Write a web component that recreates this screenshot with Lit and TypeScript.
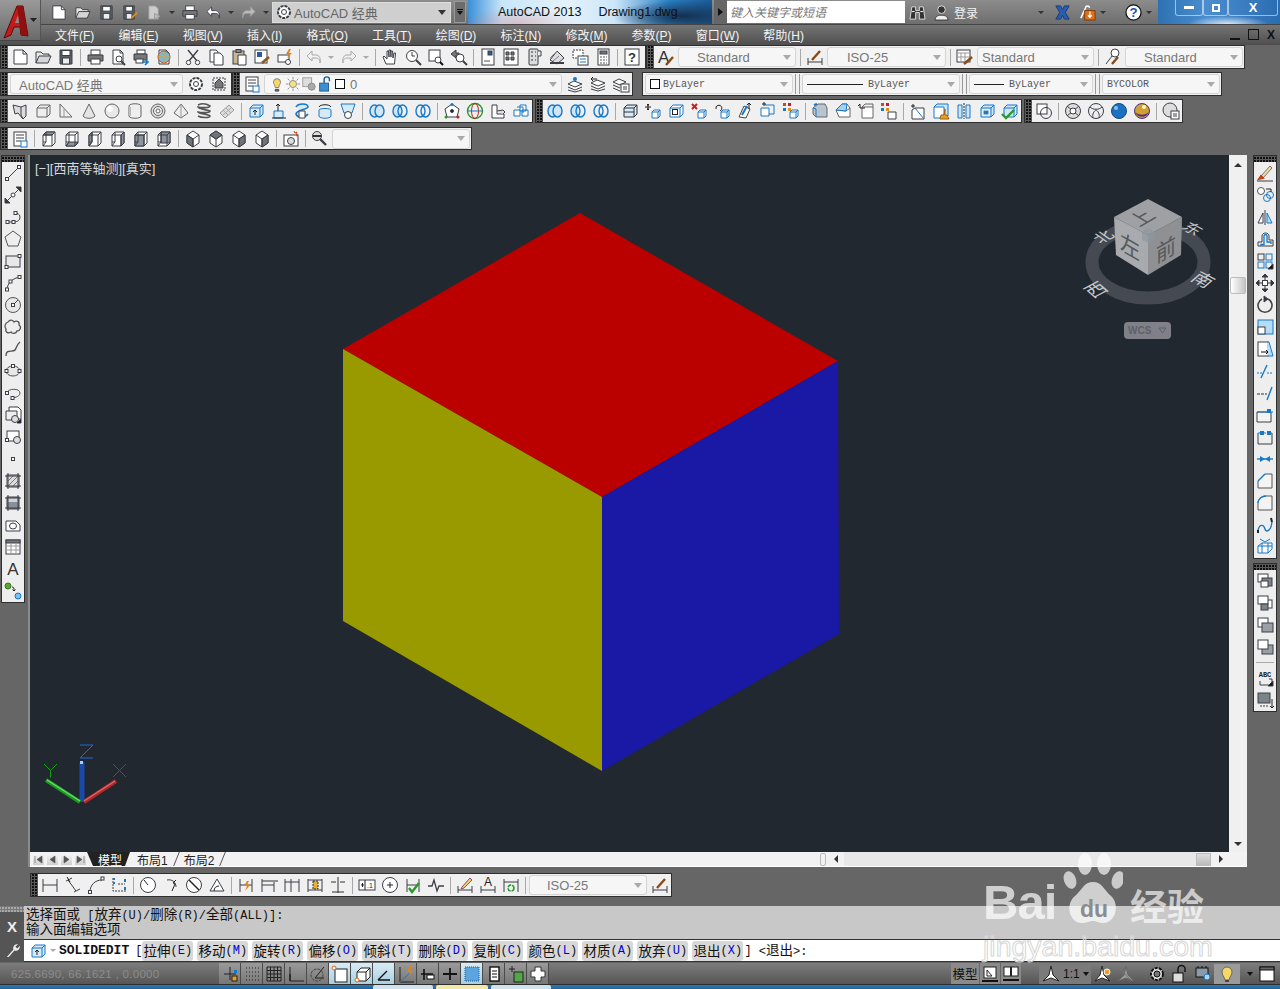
import { LitElement, css, html, svg } from 'lit';
import { customElement } from 'lit/decorators.js';

const B = '#1878c8';
const D = '#3c3f46';

const box = (fill = '#fff', s = B) => svg`<path d="M3 6l3-3h10v9l-3 3H3z" fill=${fill} stroke=${s}/><path d="M3 6h10v9M13 6l3-3" stroke=${s}/>`;
const smallBox = svg`<path d="M8 10l2-2h6v6l-2 2H8z" fill="#fff" stroke=${B}/><path d="M8 10h6v6M14 10l2-2" stroke=${B}/>`;
const page = svg`<path d="M4 2h7l3 3v11H4z" fill="#fff"/><path d="M11 2v3h3"/>`;
const rings = (a = 'none', b = 'none') => svg`<ellipse cx="6.5" cy="9" rx="4.5" ry="6" fill=${a} stroke=${B} stroke-width="1.4"/><ellipse cx="11.5" cy="9" rx="4.5" ry="6" fill=${b} stroke=${B} stroke-width="1.4"/>`;
const view = (f: string) => svg`<path d="M3 5l3-3h9v11l-3 3H3z" fill="#fff"/><path d=${f} fill="#8d949b"/><path d="M3 5h9v11M12 5l3-3M6 2v10H3M6 12l-3 4"/>`;
const iso = (f: string) => svg`<path d="M9 1l6 4v8l-6 4-6-4V5z" fill="#fff"/><path d=${f} fill="#6f747b"/><path d="M3 5l6 4 6-4M9 9v8"/>`;
const dimH = svg`<path d="M3 3v13M15 3v13M3 9h12"/>`;
const order = (a: string, b: string) => svg`<rect x="2" y="2" width="10" height="8" fill=${a}/><rect x="6" y="6" width="10" height="8" fill=${b}/><rect x="5" y="9" width="7" height="6" fill="#fff"/>`;

const I: Record<string, unknown> = {
  new: svg`<path d="M3 2h9l4 4v10H3z" fill="#fff"/><path d="M12 2v4h4"/>`,
  open: svg`<path d="M2 15V4h5l2 2h6v2" fill="#e8e8e8"/><path d="M2 15l3-7h12l-3 7z" fill="#d5d5d5"/>`,
  save: svg`<path d="M3 2h12v14H3z" fill="#5c6068"/><rect x="5" y="2.5" width="8" height="5" fill="#fff"/><rect x="5.5" y="10" width="7" height="6" fill="#eee"/>`,
  saveas: svg`<path d="M2 2h11v14H2z" fill="#5c6068"/><rect x="4" y="2.5" width="7" height="5" fill="#fff"/><rect x="4.5" y="10" width="6" height="6" fill="#eee"/><path d="M10 15l6-6" stroke="#d98a20" stroke-width="2"/>`,
  pub: svg`<path d="M3 2h7l3 3v11H3z" fill="#ccc" stroke="#999"/><path d="M9 10l6 3-6 3z" fill="#bbb" stroke="#999"/>`,
  print: svg`<rect x="5" y="2" width="9" height="5" fill="#fff"/><path d="M2 7h15v6H2z" fill="#777"/><rect x="5" y="11" width="9" height="5" fill="#fff"/>`,
  preview: svg`${page}<circle cx="10" cy="11" r="3" fill="#fff"/><path d="M12 13l4 4" stroke-width="2"/>`,
  plot: svg`<rect x="5" y="2" width="8" height="4" fill="#fff"/><path d="M2 6h13v6H2z" fill="#777"/><rect x="4" y="11" width="7" height="4" fill="#fff"/><path d="M10 14h6m-3-3l3 3-3 3" stroke=${B} stroke-width="1.6"/>`,
  dwf: svg`${page}<circle cx="9" cy="9" r="6" fill="#7ab8d8" stroke="#c05020"/><path d="M9 3v12M3 9h12" stroke="#e0a020"/>`,
  cut: svg`<path d="M4 2l9 11M14 2L5 13" stroke-width="1.4"/><circle cx="4.5" cy="14.5" r="2.2" fill="#fff"/><circle cx="13.5" cy="14.5" r="2.2" fill="#fff"/>`,
  copy: svg`<path d="M3 2h6l2 2v10H3z" fill="#fff"/><path d="M7 5h6l3 3v9H7z" fill="#fff"/>`,
  paste: svg`<rect x="3" y="3" width="11" height="13" fill="#c9b892"/><rect x="6" y="1.5" width="5" height="3" fill="#888"/><path d="M8 7h8v10H8z" fill="#fff"/>`,
  match: svg`<rect x="2" y="2" width="12" height="13" fill="#fff"/><rect x="4" y="4" width="5" height="5" fill="#2a5a9a" stroke="none"/><path d="M9 15l7-6" stroke="#8a5a20" stroke-width="2.6"/>`,
  bolt: svg`<rect x="2" y="7" width="11" height="7" fill="#fff"/><circle cx="12" cy="14" r="2.5" fill="#fff"/><path d="M13 1l-3 5h3l-2 4 5-5h-3l2-4z" fill="#e8820c" stroke="none"/>`,
  undoD: svg`<path d="M7 3L2 8l5 5V10h4c2 0 4 1 4 5 1-5-1-8-4-8H7z" fill="#fff"/>`,
  redoD: svg`<path d="M11 3l5 5-5 5v-3H7c-2 0-4 1-4 5-1-5 1-8 4-8h4z" fill="#bbb" stroke="#999"/>`,
  undoG: svg`<path d="M7 3L2 8l5 5V10h4c2 0 4 1 4 5 1-5-1-8-4-8H7z" fill="#f4f4f4" stroke="#a8a8a8"/>`,
  redoG: svg`<path d="M11 3l5 5-5 5v-3H7c-2 0-4 1-4 5-1-5 1-8 4-8h4z" fill="#f4f4f4" stroke="#a8a8a8"/>`,
  hand: svg`<path d="M5 16L2 9l1-1 3 3V3h1.5l.5 6V2h1.5l.5 7V3h1.5l.5 7 1-5h1.5l-1 11z" fill="#fff"/>`,
  zoomrt: svg`<circle cx="8" cy="8" r="5.5" fill="#fff"/><path d="M12 12l5 5" stroke-width="2"/><path d="M8 4v4h3"/>`,
  zoomwin: svg`<rect x="2" y="2" width="11" height="11" fill="#fff"/><circle cx="11" cy="12" r="3" fill="#fff"/><path d="M13 14l3 3" stroke="#111" stroke-width="2"/>`,
  zoomprev: svg`<path d="M1 6l5-4v3h3v2H6v3z" fill="#777"/><circle cx="10" cy="10" r="4" fill="#fff"/><path d="M13 13l4 4" stroke-width="2"/>`,
  props: svg`<rect x="3" y="1" width="12" height="16" fill="#fff"/><rect x="9" y="3" width="4" height="4" fill="#2a5a9a"/><path d="M5 13h6" stroke="#555"/>`,
  dc: svg`<rect x="2" y="1" width="14" height="16" fill="#fff"/><path d="M4 4h3v3H4zM9 4h3v3H9zM4 9h3v3H4zM9 9h3v3H9z" fill="#777"/>`,
  pal: svg`<rect x="4" y="1" width="9" height="16" rx="1" fill="#ddd"/><path d="M13 3h3v5h-3" fill="#eee"/><path d="M6 4h2M6 8h2M6 12h2M10 4h1M10 8h1M10 12h1" stroke="#888" stroke-width="2"/>`,
  sheet: svg`<path d="M2 12l7-9 7 7-7 6z" fill="#ddd"/><path d="M2 10l7-7M5 13l6-5" stroke="#888"/><path d="M2 15h14" stroke-width="2"/>`,
  markup: svg`<path d="M2 2h10v8H2z" fill="#fff" stroke-dasharray="2 1"/><rect x="7" y="8" width="10" height="9" fill="#fff"/><path d="M9 11h6M9 14h6" stroke=${B}/>`,
  calc: svg`<rect x="4" y="1" width="11" height="16" fill="#fff"/><rect x="6" y="3" width="7" height="3" fill="#777"/><path d="M6 9h7M6 12h7M6 15h7" stroke="#555" stroke-dasharray="2 1"/>`,
  help: svg`<rect x="2" y="1" width="14" height="16" fill="#fff"/><text x="9" y="14" font-size="13" font-weight="bold" text-anchor="middle" fill="#333" stroke="none">?</text>`,
  textstyle: svg`<text x="1" y="15" font-size="17" fill="#333" stroke="none" font-family="Liberation Sans">A</text><path d="M9 17l7-8" stroke="#8a4a18" stroke-width="2.4"/>`,
  dimstyle: svg`<path d="M2 10v7M16 10v7M2 14h14"/><path d="M6 12l8-9" stroke="#8a4a18" stroke-width="2.4"/>`,
  tablestyle: svg`<rect x="1" y="2" width="13" height="12" fill="#fff"/><path d="M1 5h13M1 9h13M5 5v9M9 5v9" stroke="#999"/><path d="M8 16l8-7" stroke="#8a4a18" stroke-width="2.4"/>`,
  mleader: svg`<circle cx="11" cy="5" r="4" fill="#fff"/><path d="M8 8l-6 8"/><path d="M8 16l6-7" stroke="#8a4a18" stroke-width="2.4"/>`,
  wscog: svg`<circle cx="9" cy="9" r="6" fill="#fff" stroke-dasharray="3 1" stroke-width="2"/><circle cx="9" cy="9" r="2.5"/>`,
  lockui: svg`<path d="M3 3h12v12H3z" stroke-dasharray="2 1" fill="#eee"/><path d="M5 13V8l4-4 4 4v5z" fill="#777"/>`,
  layers: svg`<rect x="3" y="2" width="12" height="14" fill="#fff"/><path d="M5 5h8M5 8h8M5 11h5"/><rect x="10" y="11" width="6" height="6" fill="#fff" stroke=${B}/>`,
  layerstate: svg`<path d="M2 9l6-3 8 3-7 3zM2 12l7 3 7-3M2 15l7 2 7-2" fill="#fff"/><circle cx="9" cy="4" r="2" fill=${B} stroke="none"/>`,
  layerprev: svg`<path d="M2 8l6-3 8 3-7 3zM2 11l7 3 7-3M2 14l7 2 7-2" fill="#fff"/><path d="M8 4H2m2-2L2 4l2 2" stroke="#222"/>`,
  layerlist: svg`<path d="M1 7l6-3 7 3-6 3zM1 10l7 3M1 13l7 3" fill="#fff"/><rect x="9" y="9" width="8" height="8" fill="#fff"/><path d="M11 12h4M11 14h4"/>`,
  bulb: svg`<path d="M5 7a4 4 0 118 0c0 2-2 3-2 6H7c0-3-2-4-2-6z" fill="#f6d868" stroke="#777"/><path d="M7 15h4v2H7z" fill="#777"/>`,
  sun: svg`<circle cx="9" cy="9" r="4" fill="#f6e088" stroke="#888"/><path d="M9 1v3M9 14v3M1 9h3M14 9h3M3 3l2 2M13 13l2 2M15 3l-2 2M5 13l-2 2" stroke="#888"/>`,
  freeze: svg`<rect x="2" y="2" width="10" height="10" fill="#ddd" stroke="#999"/><circle cx="12" cy="12" r="4" fill="#aaa" stroke="#888"/>`,
  lock: svg`<rect x="3" y="8" width="10" height="9" fill="#3b8fd0" stroke="#1c5a90"/><path d="M8 8V4a3 3 0 016 0v2" stroke="#1c5a90" stroke-width="1.6"/>`,
  polysolid: svg`<path d="M2 3l8 2 5-2v11l-3 3-5-6-3 1z" fill="#dcdcdc"/><path d="M10 5v8l2 4"/>`,
  box3d: svg`<path d="M3 6l3-3h10v9l-3 3H3z" fill="#eee" stroke="#666"/><path d="M3 6h10v9M13 6l3-3" stroke="#666"/>`,
  wedge: svg`<path d="M3 2l12 13H3z" fill="#eee" stroke="#666"/><path d="M7 7v8" stroke="#999"/>`,
  cone: svg`<path d="M9 2l6 12c-2 3-10 3-12 0z" fill="#e4e4e4" stroke="#666"/>`,
  sphere: svg`<circle cx="9" cy="9" r="7" fill="#e8e8e8" stroke="#666"/><ellipse cx="7" cy="7" rx="3" ry="3" fill="#fff" stroke="none"/>`,
  cyl: svg`<path d="M3 4c0-3 12-3 12 0v10c0 3-12 3-12 0z" fill="#eee" stroke="#666"/><path d="M4 5v9" stroke="#bbb" stroke-width="2"/>`,
  torus: svg`<circle cx="9" cy="9" r="7" fill="#ddd" stroke="#666"/><circle cx="9" cy="9" r="4.5" fill="#eee" stroke="#666"/><circle cx="9" cy="9" r="2" fill="#fff" stroke="#666"/>`,
  pyramid: svg`<path d="M9 2l7 9-7 5-7-5z" fill="#eee" stroke="#666"/><path d="M9 2v14" stroke="#999"/>`,
  helix: svg`<path d="M3 3c4-2 9-1 12 1 0 2-9 2-12 1 0 2 10 3 12 4 0 2-9 2-12 1 0 2 10 2 12 4 0 2-9 2-12 0" stroke="#555" stroke-width="1.6"/>`,
  planar: svg`<path d="M2 11l9-8 5 5-9 8z" fill="#ddd" stroke="#999"/><path d="M5 8l5 5M8 6l5 5M5 13l8-7" stroke="#aaa"/>`,
  extrude: svg`${box('#d6eaf8')}<path d="M8 13V8m-2 2l2-2 2 2" stroke="#222"/>`,
  press: svg`<path d="M4 9h9v7H4z" fill="#d6eaf8" stroke=${B}/><path d="M8 9V2m-2 2l2-2 2 2" stroke="#222"/><path d="M2 16h14" stroke="#222"/>`,
  sweep: svg`<path d="M3 5c2-4 12-4 12 0-1 3-11 2-12 7 1 4 9 4 12 0" fill="#d6eaf8" stroke=${B} stroke-width="1.6"/><path d="M6 9h6v7H6z" fill="#fff"/>`,
  revolve: svg`<path d="M3 5c1-3 11-3 12 0" stroke="#222"/><path d="M3 8c0-2 12-2 12 0v6c0 3-12 3-12 0z" fill="#d6eaf8" stroke=${B}/>`,
  loft: svg`<path d="M2 2h14l-3 9H5z" fill="#d6eaf8" stroke=${B}/><circle cx="9" cy="13" r="3.5" fill="#fff"/>`,
  union: rings('#cfe6f8', '#cfe6f8'),
  subtract: rings('#cfe6f8'),
  intersect: rings('none', 'none'),
  gizmo: svg`<path d="M9 2l7 5-2 8H4L2 7z" fill="#fff"/><circle cx="9" cy="9" r="1.5" fill="#222"/><circle cx="9" cy="2.5" r="1.5" fill=${B} stroke="none"/><circle cx="3" cy="15" r="1.5" fill="#2a9a2a" stroke="none"/><circle cx="15" cy="15" r="1.5" fill="#c02020" stroke="none"/>`,
  orbit3d: svg`<circle cx="9" cy="9" r="7.5" stroke="#2a9a2a" stroke-width="1.4" fill="#eee"/><ellipse cx="9" cy="9" rx="3.5" ry="7.5" stroke="#c02020"/><path d="M1.5 9h15" stroke=${B}/>`,
  align3d: svg`<path d="M3 3h5v9h7v4H3z" fill="#fff"/><path d="M8 9l6-1 2 2-2 2" fill="#ddd"/>`,
  array3d: svg`<path d="M2 8h6v6H2zM8 3h6v6H8zM10 8h6v6h-6zM5 5h6v6" fill="#fff" stroke=${B}/>`,
  faceExtrude: svg`${box('#d6eaf8', '#333')}<path d="M3 10h10" stroke="#333"/>`,
  fMove: svg`<path d="M4 2v6M1 5h6M4 2L3 3h2zM4 8L3 7h2z" stroke="#222"/>${smallBox}`,
  fOff: svg`${box('#fff')}<rect x="5.5" y="7.5" width="5" height="5" stroke="#222"/>`,
  fDel: svg`<path d="M2 2l5 5M7 2L2 7" stroke="#c02020" stroke-width="2"/>${smallBox}`,
  fRot: svg`<path d="M3 7a3 3 0 114 2" stroke="#222"/>${smallBox}`,
  fTaper: svg`<path d="M3 15l5-11 6 3-4 9z" fill="#fff" stroke="#444"/><path d="M6 13l5-9" stroke=${B} stroke-width="2"/><path d="M13 7V1m-2 2l2-2 2 2" stroke="#222"/>`,
  fCopy: svg`<path d="M2 6h8v8H2z" fill="#fff" stroke=${B}/><path d="M6 3h9v9h-5" stroke=${B}/><path d="M3 2h4M5 0v4" stroke="#222"/>`,
  fColor: svg`<rect x="1" y="1" width="3" height="3" fill="#c05020" stroke="none"/><rect x="6" y="1" width="3" height="3" fill="#c02040" stroke="none"/><rect x="1" y="6" width="3" height="3" fill=${B} stroke="none"/><rect x="6" y="6" width="3" height="3" fill="#e09020" stroke="none"/>${smallBox}`,
  eFace: svg`<path d="M2 6l5-4h7l2 4v9H5l-3-3z" fill="#b9c5ce" stroke="#666"/><path d="M5 15V7l-3-1" stroke=${B}/><path d="M3 3l3-1" stroke=${B} stroke-width="2"/>`,
  eChamfer: svg`<path d="M2 8l6-6h5l3 4v9H5z" fill="#fff" stroke="#666"/><path d="M2 8l10 1 4-3" fill="none" stroke="#666"/><path d="M2 8l6-6 5 0-1 7z" fill="#a9d0ec" stroke=${B}/>`,
  eExtract: svg`<path d="M5 5h11v11H5z" fill="#fff" stroke="#666"/><path d="M5 5l3-3h8v3" stroke="#666"/><path d="M1 4l2-2v4h5" stroke="#222"/>`,
  eColor: svg`<rect x="1" y="1" width="3" height="3" fill="#c05020" stroke="none"/><rect x="6" y="1" width="3" height="3" fill="#c02040" stroke="none"/><rect x="1" y="6" width="3" height="3" fill=${B} stroke="none"/><rect x="6" y="6" width="3" height="3" fill="#e09020" stroke="none"/><path d="M8 10h8v7H8z" fill="#fff"/>`,
  imprint: svg`<path d="M2 4h4M4 2v4" stroke="#222"/><path d="M3 8l3-2h9v11H3z" fill="#fff"/><path d="M6 6l9 11" stroke=${B}/>`,
  clean: svg`<path d="M2 5l3-3h11v12h-4" fill="#cfe6f8" stroke=${B}/><path d="M2 5h10v11H2z" fill="#fff" stroke=${B}/><path d="M13 7l-1 6h-3l-1 4h9l-2-4h-2z" fill="#e8a020" stroke="#a06010"/>`,
  separate: svg`<path d="M3 3h4v13H3zM11 3h4v13h-4z" fill="#cfe6f8" stroke=${B}/><path d="M9 1v16" stroke="#222" stroke-dasharray="2 1"/>`,
  shell: svg`${box('#cfe6f8')}<rect x="5" y="8" width="6" height="5" fill="#2a78b8" stroke="#fff"/>`,
  check3d: svg`${box('#cfe6f8')}<path d="M1 12l4 4 8-8" stroke="#2a9a2a" stroke-width="2.4"/>`,
  slice: svg`<rect x="2" y="2" width="10" height="10" fill="#fff"/><circle cx="11" cy="11" r="5.5"/>`,
  s1: svg`<circle cx="9" cy="9" r="7.5" fill="#ddd"/><path d="M3 4l12 10M3 14L15 4"/><circle cx="9" cy="9" r="3" fill="#fff"/>`,
  s2: svg`<circle cx="9" cy="9" r="7.5" fill="#eee"/><path d="M3 5c3 3 9 3 12 0M6 16c-1-4 1-7 3-8 2 1 4 4 3 8"/>`,
  s3: svg`<circle cx="9" cy="9" r="7.5" fill="#1c70c0" stroke="#104a88"/><circle cx="6" cy="6" r="2" fill="#8ac0ee" stroke="none"/>`,
  s4: svg`<circle cx="9" cy="9" r="7.5" fill="#d0a030" stroke="#50308a"/><path d="M2 10a7.5 7.5 0 0014 0c-3 3-10 4-14 0z" fill="#50308a" stroke="none"/><circle cx="11" cy="5" r="2" fill="#fff6c0" stroke="none"/>`,
  s5: svg`<circle cx="8" cy="8" r="7" fill="#ddd"/><rect x="9" y="9" width="8" height="8" fill="#fff"/><path d="M11 12h4M11 14h4"/>`,
  vTop: view('M3 5l3-3h9l-3 3z'),
  vBot: view('M3 16l3-4h9l-3 4z'),
  vLeft: view('M3 5l3-3v10l-3 4z'),
  vRight: view('M12 5l3-3v11l-3 3z'),
  vFront: view('M3 5h9v11H3z'),
  vBack: view('M6 2h9v11H6z'),
  iso1: iso('M3 5l6 4v8l-6-4z'),
  iso2: iso('M9 1l6 4-6 4-6-4z'),
  iso3: iso('M15 5l-6 4v8l6-4z'),
  iso4: iso('M9 9l6-4v8l-6 4z'),
  cam: svg`<rect x="2" y="5" width="14" height="11" fill="#fff"/><circle cx="9" cy="11" r="3.5" fill="#ddd"/><path d="M12 1l1 2 2-1-1 2 2 1-2 1" stroke="#d04010"/>`,
  ucsback: svg`<circle cx="6" cy="6" r="4.5" fill="#ddd"/><path d="M2 6h8" stroke="#333" stroke-width="2"/><path d="M9 9l6 6" stroke-width="2.4"/>`,
  line: svg`<path d="M3 15L15 3"/><rect x="1.5" y="13.5" width="3" height="3" fill="#fff"/><rect x="13.5" y="1.5" width="3" height="3" fill="#fff"/>`,
  xline: svg`<path d="M2 16L16 2"/><path d="M1 17v-5l5 5zM17 1v5l-5-5z" fill="#333"/><circle cx="9" cy="9" r="2" fill="#fff"/>`,
  pline: svg`<path d="M3 14h6c5 0 7-2 7-5s-3-4-5-4"/><rect x="2" y="12.5" width="3" height="3" fill="#fff"/><rect x="8" y="12.5" width="3" height="3" fill="#fff"/><rect x="10" y="3.5" width="3" height="3" fill="#fff"/>`,
  polygon: svg`<path d="M9 1l8 6-3 9H4L1 7z" fill="#eee" stroke="#555"/>`,
  rect: svg`<rect x="2" y="4" width="14" height="11" fill="#e8e8e8"/><rect x="1" y="13.5" width="3" height="3" fill="#fff"/><rect x="14" y="2.5" width="3" height="3" fill="#fff"/>`,
  arc: svg`<path d="M3 16c0-7 6-12 13-13"/><rect x="1.5" y="14" width="3" height="3" fill="#fff"/><rect x="5" y="6" width="3" height="3" fill="#fff"/><rect x="14" y="1.5" width="3" height="3" fill="#fff"/>`,
  circle: svg`<circle cx="9" cy="9" r="7.5" fill="#e8e8e8" stroke="#555"/><rect x="7.5" y="7.5" width="3" height="3" fill="#fff"/><path d="M10 8l4-4"/>`,
  cloud: svg`<path d="M4 4c2-3 5-2 6 0 3-2 6 0 5 3 3 2 1 6-2 6-1 3-5 3-6 1-3 2-6 0-5-3-2-2-1-6 2-7z" fill="#eee" stroke="#555" stroke-width="1.3"/>`,
  spline: svg`<path d="M2 16c0-8 7-3 9-6s2-6 5-8" stroke="#555" stroke-width="1.4"/>`,
  ellipse: svg`<ellipse cx="9" cy="9" rx="7" ry="5" fill="#e8e8e8" stroke="#555"/><rect x="1" y="7.5" width="3" height="3" fill="#fff"/><rect x="14" y="7.5" width="3" height="3" fill="#fff"/><rect x="7.5" y="2.5" width="3" height="3" fill="#fff"/>`,
  earc: svg`<path d="M3 9c1-5 13-5 13 0 0 4-7 5-8 5" stroke="#555"/><rect x="1.5" y="7.5" width="3" height="3" fill="#fff"/><rect x="7" y="12.5" width="3" height="3" fill="#fff"/>`,
  insert: svg`<path d="M5 1h9l3 3v9H5z" fill="#fff"/><path d="M2 5h11v9H2z" fill="#eee"/><circle cx="11" cy="13" r="3.5" fill="#ddd"/><path d="M13 17l4-4v4z" fill="#111"/>`,
  block: svg`<rect x="3" y="3" width="12" height="10" fill="#fff"/><circle cx="13" cy="12" r="3.5" fill="#ddd"/><rect x="1.5" y="10.5" width="3" height="3" fill="#fff"/>`,
  point: svg`<rect x="7.5" y="7.5" width="3" height="3" fill="#fff"/>`,
  hatch: svg`<rect x="3" y="3" width="12" height="12" fill="#ddd"/><path d="M4 9l5-5M4 14L14 4M9 14l5-5" stroke="#777"/><path d="M1 4h16M1 14h16M4 1v16M14 1v16"/>`,
  gradient: svg`<rect x="3" y="3" width="12" height="12" fill="#8a9098"/><rect x="4" y="4" width="10" height="4" fill="#d0d4d8" stroke="none"/><path d="M1 4h16M1 14h16M4 1v16M14 1v16"/>`,
  region: svg`<path d="M2 5h10l4 4v6H2z" fill="#fff"/><ellipse cx="9" cy="10" rx="3.5" ry="3" fill="#fff"/>`,
  table: svg`<rect x="2" y="2" width="14" height="14" fill="#fff"/><rect x="2" y="2" width="14" height="3" fill="#777"/><path d="M2 8h14M2 12h14M7 5v11M12 5v11" stroke="#999"/>`,
  text: svg`<text x="9" y="15" font-size="17" text-anchor="middle" fill="#333" stroke="none" font-family="Liberation Sans">A</text>`,
  addsel: svg`<circle cx="4" cy="4" r="3" fill="#5aa838" stroke="#3a7820"/><circle cx="14" cy="14" r="3" fill="#7ac0ee" stroke=${B}/><path d="M8 5c2 0 2 1 2 4m-1.5-1.5L10 9l1.5-1.5" stroke="#222"/>`,
  erase: svg`<path d="M5 12L14 2l2 2-9 10z" fill="#f0d8a0" stroke="#777"/><path d="M3 15l2-3 2 2z" fill="#c04010" stroke="#c04010" stroke-width="2"/><path d="M1 17h16"/>`,
  copyobj: svg`<circle cx="5" cy="5" r="3.5" fill="#fff" stroke="#555"/><circle cx="11" cy="12" r="3.5" stroke=${B}/><circle cx="14" cy="9" r="3.5" stroke=${B}/><path d="M10 3h5v3" stroke="#222"/>`,
  mirror: svg`<path d="M2 15l5-10v10z" fill="#fff"/><path d="M16 15l-5-10v10z" fill="#b6dcf6" stroke=${B}/><path d="M9 2v15"/>`,
  offset: svg`<path d="M2 16v-4h4V6c0-4 7-4 7 0v4h4v6z"/><path d="M5 16v-1.5h3V6c0-2 3-2 3 0v6h4v2" stroke=${B} stroke-width="1.3"/>`,
  array: svg`<rect x="2" y="2" width="6" height="6"/><rect x="10" y="2" width="6" height="6" stroke=${B}/><rect x="2" y="10" width="6" height="6" stroke=${B}/><rect x="10" y="10" width="6" height="6" stroke=${B}/><path d="M12 17l5-5v5z" fill="#111"/>`,
  move: svg`<path d="M9 1v16M1 9h16" stroke="#333"/><path d="M9 0l-3 3h6zM9 18l-3-3h6zM0 9l3-3v6zM18 9l-3-3v6z" fill="#333"/><rect x="6.5" y="6.5" width="5" height="5" fill="#fff"/>`,
  rotate: svg`<path d="M6 3a7 7 0 106 0" stroke="#444" stroke-width="1.6"/><path d="M8 0l4 3-4 3z" fill="#333"/>`,
  scale: svg`<rect x="2" y="2" width="15" height="14" fill="#b6dcf6" stroke=${B}/><rect x="2" y="9" width="7" height="7" fill="#fff"/>`,
  stretch: svg`<rect x="2" y="2" width="10" height="14" fill="#fff"/><path d="M11 2h2l4 14h-6" fill="#b6dcf6" stroke=${B}/><path d="M5 12h7m-2-2l2 2-2 2" stroke="#111"/>`,
  trim: svg`<path d="M1 11h5M11 11h6" stroke-dasharray="2 1" stroke=${B}/><path d="M5 16l6-13" stroke=${B} stroke-width="1.4"/>`,
  extend: svg`<path d="M1 10h10" stroke="#333" stroke-dasharray="3 1"/><path d="M11 16l5-13" stroke=${B} stroke-width="1.4"/>`,
  breakpt: svg`<path d="M1 6h14v10H1z" fill="#f4f4f4"/><path d="M1 6h16" stroke=${B}/><rect x="11" y="3" width="4" height="4" fill=${B} stroke="none"/>`,
  brk: svg`<path d="M2 5v11h14V5"/><path d="M2 5h14" stroke=${B} stroke-dasharray="8 4" /><rect x="4" y="3" width="4" height="4" fill=${B} stroke="none"/><rect x="11" y="3" width="4" height="4" fill=${B} stroke="none"/>`,
  join: svg`<path d="M1 9h16" stroke=${B} stroke-width="1.4"/><path d="M4 6l5 3-5 3zM14 6L9 9l5 3z" fill=${B} stroke="none"/>`,
  chamfer: svg`<path d="M2 16V9l7-7h7v14z" fill="#f4f4f4" stroke="#555"/><path d="M2 9l7-7" stroke=${B} stroke-width="1.4"/>`,
  fillet: svg`<path d="M2 16V9c0-4 4-7 8-7h6v14z" fill="#f4f4f4" stroke="#555"/><path d="M2 9c0-4 4-7 8-7" stroke=${B} stroke-width="1.4"/>`,
  blend: svg`<path d="M2 14c2-7 6-5 7-1s6 2 7-7" stroke=${B} stroke-width="1.4"/><path d="M2 14v3M15 2l1 4" stroke="#222" stroke-width="2"/>`,
  explode: svg`<path d="M2 8l4-3h10v6l-4 4H2z" fill="#fff" stroke=${B}/><path d="M6 5v10M12 5v10M2 8h14" stroke=${B}/><path d="M4 1l5 3 5-3" stroke=${B}/>`,
  oFront: order('#fff', '#7c848b'),
  oBack: svg`<rect x="6" y="6" width="10" height="8" fill="#fff"/><rect x="2" y="2" width="10" height="8" fill="#fff"/><rect x="5" y="10" width="7" height="6" fill="#7c848b"/>`,
  oAbove: svg`<rect x="2" y="2" width="10" height="9" fill="#fff"/><rect x="6" y="7" width="11" height="9" fill="#9aa0a6"/>`,
  oBelow: svg`<rect x="6" y="7" width="11" height="9" fill="#9aa0a6"/><rect x="2" y="2" width="10" height="9" fill="#fff"/>`,
  abc: svg`<text x="9" y="8" font-size="7" font-weight="bold" text-anchor="middle" fill="#222" stroke="none" font-family="Liberation Mono">ABC</text><path d="M13 10h3v6H4v-4"/><path d="M12 17l5-5v5z" fill="#111"/>`,
  bound: svg`<rect x="2" y="2" width="12" height="10" fill="#7c848b"/><path d="M4 15h8" stroke-dasharray="2 1"/><path d="M16 8v9m-2-2l2 2 2-2" stroke="#222"/>`,
  dLinear: svg`<path d="M2 3v13M16 3v13M2 9h14"/>`,
  dAligned: svg`<path d="M2 5l6 -3M10 16l6-3M4 4l8 11" /><path d="M3 1l3 5" stroke="#222" />`,
  dArc: svg`<path d="M3 16c0-7 5-12 12-12"/><rect x="1.5" y="14.5" width="3" height="3" fill="#fff"/><rect x="14" y="1" width="3" height="3" fill="#fff"/>`,
  dOrd: svg`<path d="M3 2v13h13M8 8h7" stroke-dasharray="2 1"/><path d="M3 3h2M3 7h2" stroke=${B} stroke-width="2"/><path d="M15 3v3M15 11v3" stroke=${B} stroke-width="2"/>`,
  dRadius: svg`<circle cx="9" cy="9" r="7.5" fill="#fff"/><path d="M9 9l-4-5" stroke="#222"/>`,
  dJog: svg`<path d="M5 4c5-1 9 2 9 7"/><path d="M14 4l-3 3 2 1-3 7" stroke="#222"/>`,
  dDiam: svg`<circle cx="9" cy="9" r="7.5" fill="#fff"/><path d="M4 4l10 10" stroke="#222" stroke-width="1.4"/>`,
  dAngle: svg`<path d="M2 15h14L9 3z" fill="#fff"/><path d="M6 15c0-3 2-5 5-5" stroke="#222"/>`,
  dQuick: svg`${dimH}<path d="M10 5l-3 5h3l-2 5 5-6h-3l2-4z" fill="#e8820c" stroke="none"/>`,
  dBase: svg`<path d="M2 3v13M14 6v10M2 9h12"/><path d="M2 5h16" stroke="#333"/>`,
  dCont: svg`<path d="M2 3v13M8 3v13M16 3v13M2 6h14"/>`,
  dSpace: svg`<path d="M2 3v13M16 3v13M2 4h14M2 14h14"/><rect x="7" y="5" width="5" height="8" fill="#e8b030" stroke="#333" stroke-dasharray="2 1"/>`,
  dBreak: svg`<path d="M9 1v16M3 16h12M2 6h5M11 6h5" stroke="#333"/>`,
  dTol: svg`<rect x="1" y="4" width="16" height="10" fill="#fff"/><path d="M7 4v10M3 9h3M4.5 7v4" stroke="#222"/><text x="12" y="12" font-size="7" fill="#222" stroke="none" text-anchor="middle">.1</text>`,
  dCenter: svg`<circle cx="9" cy="9" r="7.5" fill="#fff"/><path d="M6 9h6M9 6v6" stroke="#222"/>`,
  dInspect: svg`${dimH}<path d="M5 12l3 4 7-9" stroke="#2a9a2a" stroke-width="2.4"/>`,
  dJogLine: svg`<path d="M1 10h4l2-6 3 11 2-5h5" stroke-width="1.3"/>`,
  dEdit: svg`<path d="M2 10v7M16 10v7M2 14h14"/><path d="M6 11l8-9 2 2-8 8-3 1z" fill="#f0d070" stroke="#855"/>`,
  dTextEd: svg`<path d="M2 10v7M16 10v7M2 14h14"/><text x="9" y="10" font-size="12" text-anchor="middle" fill="#222" stroke="none" font-family="Liberation Sans">A</text>`,
  dUpdate: svg`<path d="M2 3v13M16 3v13M2 6h14"/><circle cx="9" cy="12" r="3" stroke="#2a9a2a" stroke-width="1.6" stroke-dasharray="4 1"/>`,
  sInfer: svg`<path d="M9 2v13M3 9h12" stroke="#222"/><rect x="11" y="11" width="5" height="5" fill="#e8a020" stroke="#222"/><rect x="13" y="5" width="3" height="3" fill=${B} stroke="none"/>`,
  sSnap: svg`<path d="M3 3h13M3 7h13M3 11h13M3 15h13" stroke="#222" stroke-dasharray="1 2"/>`,
  sGrid: svg`<path d="M2 2h14v14H2zM2 5.5h14M2 9h14M2 12.5h14M5.5 2v14M9 2v14M12.5 2v14" stroke="#222"/>`,
  sOrtho: svg`<path d="M3 2v14h14" stroke="#222"/><path d="M3 16V9" stroke="#222" stroke-width="1.4"/>`,
  sPolar: svg`<circle cx="8" cy="10" r="6" stroke="#444" stroke-dasharray="3 1"/><path d="M6 13l9-11" stroke="#222"/><path d="M6 13h9" stroke="#222"/>`,
  sOsnap: svg`<rect x="4" y="4" width="12" height="13" fill="#fff" stroke="#222"/><circle cx="3" cy="3" r="2" fill="#fff" stroke="#e06010"/>`,
  s3dosnap: svg`<path d="M4 7l4-4h9v9l-4 4H4z" fill="#fff" stroke="#222"/><path d="M4 7h9v9M13 7l4-4" stroke="#222"/><circle cx="4" cy="15" r="2" fill="#fff" stroke="#e06010"/>`,
  sOtrack: svg`<path d="M3 15h12M3 15l9-9" stroke="#111" stroke-width="1.4"/>`,
  sDucs: svg`<path d="M3 2v15h14" stroke="#222"/><path d="M3 17L15 6" stroke=${B}/><path d="M13 1l-3 6h3l-2 5 5-6h-3l2-5z" fill="#e8820c" stroke="none"/>`,
  sDyn: svg`<path d="M5 4v11M2 9h12" stroke="#111" stroke-width="1.6"/><rect x="8" y="10" width="7" height="4" fill="#fff" stroke="#111"/>`,
  sLwt: svg`<path d="M9 3v12" stroke="#111" stroke-width="1.8"/><path d="M2 9h14" stroke="#111" stroke-width="2"/>`,
  sTransp: svg`<rect x="2" y="2" width="14" height="14" fill="#5ba4e0" stroke="#1c5a90" stroke-dasharray="1 1"/>`,
  sQp: svg`<rect x="5" y="2" width="9" height="14" fill="#fff" stroke="#111" stroke-width="1.4"/><path d="M7 6h5M7 9h5M7 12h5" stroke="#111"/>`,
  sSc: svg`<path d="M2 4h6M5 1v6" stroke="#222"/><rect x="7" y="7" width="9" height="10" fill="#50a848" stroke="#222"/>`,
  sPlus: svg`<path d="M6 2h6v4h4v6h-4v4H6v-4H2V6h4z" fill="#fff" stroke="#333"/>`,
  sLayout: svg`<rect x="3" y="2" width="12" height="11" fill="#fff" stroke="#222"/><path d="M6 11V5l5 6z" stroke="#222"/><path d="M1 16h16" stroke="#111" stroke-width="2"/>`,
  sQv: svg`<rect x="2" y="2" width="6.5" height="9" fill="#fff" stroke="#222"/><rect x="9.5" y="2" width="6.5" height="9" fill="#fff" stroke="#222"/><path d="M1 15h16" stroke="#111" stroke-width="2"/>`,
  sAnno: svg`<path d="M9 1l2 9 6 6-8-3-8 3 6-6z" fill="#fff" stroke="#222"/>`,
  sAnnoA: svg`<path d="M8 1l2 9 6 6-8-3-7 3 5-6z" fill="#fff" stroke="#222"/><circle cx="13" cy="7" r="3" fill="#f0a020" stroke="#fff"/>`,
  sAnnoB: svg`<path d="M9 1l2 9 6 6-8-3-8 3 6-6z" fill="#9a9a9a" stroke="#666"/><path d="M3 4l12 12" stroke="#777"/>`,
  sGear: svg`<circle cx="9" cy="9" r="6" fill="#ddd" stroke="#111" stroke-width="2" stroke-dasharray="3 1.2"/><circle cx="9" cy="9" r="3" fill="#777" stroke="#111"/>`,
  sLock: svg`<rect x="2" y="8" width="10" height="9" fill="#ddd" stroke="#111"/><path d="M7 8V4a3.5 3.5 0 017 0v3" stroke="#111" stroke-width="1.4"/>`,
  sHw: svg`<rect x="2" y="3" width="12" height="9" fill="#8a9aa8" stroke="#111"/><path d="M4 1v2M8 1v2M12 1v2" stroke="#111"/><circle cx="13" cy="12" r="3" fill="#a8d8f8" stroke=${B}/>`,
  sBulb: svg`<path d="M4 7a5 5 0 0110 0c0 3-2 4-3 8H7c-1-4-3-5-3-8z" fill="#f6d868" stroke="#666"/><path d="M7 16h4" stroke="#444" stroke-width="2"/>`,
  sWin: svg`<rect x="2" y="2" width="14" height="14" fill="#fff" stroke="#111"/><rect x="2" y="2" width="14" height="3" fill="#666" stroke="#111"/>`,
  binoc: svg`<path d="M3 3h4v4h4V3h4l2 13h-6V9H7v7H1z" fill="#333" stroke="#ddd"/><path d="M3 8h3M12 8h3" stroke="#fff"/>`,
  user: svg`<circle cx="9" cy="6" r="4" fill="#333" stroke="#ddd"/><path d="M2 17c1-5 4-5 7-5s6 0 7 5z" fill="#eee" stroke="#333"/>`,
  xchange: svg`<path d="M2 2h5l2 4 2-4h5l-4 7 4 7h-5l-2-4-2 4H2l4-7z" fill="#2a5db0" stroke="#183a78"/>`,
  a360: svg`<path d="M2 15l5-11a2 2 0 014 0" stroke="#fff" stroke-width="1.6"/><rect x="6" y="7" width="11" height="10" fill="#e07018" stroke="#803a08"/><path d="M11.5 8v6m-2-2l2 2 2-2" stroke="#fff" stroke-width="1.4"/>`,
  helpC: svg`<circle cx="9" cy="9" r="8" fill="#fff" stroke="#111" stroke-width="1.3"/><text x="9" y="14" font-size="14" font-weight="bold" text-anchor="middle" fill="#2050a8" stroke="none" font-family="Liberation Sans">?</text>`,
};

const icon = (n: string) => html`<svg class="ic" viewBox="0 0 18 18" fill="none" stroke=${D}>${I[n]}</svg>`;

const cjkRun = /([\u4e00-\u9fff]+)/;
// command line text: wider CJK beside a monospace latin
const mix = (t: string) => t.split(cjkRun).map((p, i) => (i % 2 ? html`<span class="cj">${p}</span>` : p));

const TB_ROW1A = 'new open save | print preview plot dwf | cut copy paste match bolt | undoG ^ redoG ^ | hand zoomrt zoomwin zoomprev | props dc pal sheet markup calc | help';
const TB_ROW3A = 'polysolid box3d wedge cone sphere cyl torus pyramid helix planar | extrude press sweep revolve loft | union subtract intersect | gizmo orbit3d align3d array3d';
const TB_ROW3B = 'union subtract intersect | faceExtrude fMove fOff fDel fRot fTaper fCopy fColor | eFace eChamfer eExtract eColor | imprint clean separate shell check3d';
const TB_ROW3C = 'slice | s1 s2 s3 s4 | s5';
const TB_ROW4 = 'layers | vTop vBot vLeft vRight vFront vBack | iso1 iso2 iso3 iso4 | cam | ucsback';
const TB_DIM = 'dLinear dAligned dArc dOrd | dRadius dJog dDiam dAngle | dQuick dBase dCont dSpace dBreak | dTol dCenter dInspect dJogLine | dEdit dTextEd dUpdate |';
const LEFT = 'line xline pline polygon rect arc circle cloud spline ellipse earc insert block point hatch gradient region table text addsel';
const RIGHT = 'erase copyobj mirror offset array move rotate scale stretch trim extend breakpt brk join chamfer fillet blend explode';
const STATUS = ['sInfer', 'sSnap', 'sGrid', 'sOrtho', 'sPolar', 'sOsnap', 's3dosnap', 'sOtrack', 'sDucs', 'sDyn', 'sLwt', 'sTransp', 'sQp', 'sSc', 'sPlus'];
const STATUS_ON = new Set(['sOsnap', 's3dosnap', 'sOtrack', 'sTransp']);
const MENU: [string, string][] = [['文件', 'F'], ['编辑', 'E'], ['视图', 'V'], ['插入', 'I'], ['格式', 'O'], ['工具', 'T'], ['绘图', 'D'], ['标注', 'N'], ['修改', 'M'], ['参数', 'P'], ['窗口', 'W'], ['帮助', 'H']];
const OPTS: [string, string][] = [['拉伸', 'E'], ['移动', 'M'], ['旋转', 'R'], ['偏移', 'O'], ['倾斜', 'T'], ['删除', 'D'], ['复制', 'C'], ['颜色', 'L'], ['材质', 'A'], ['放弃', 'U'], ['退出', 'X']];

const caretDown = html`<i class="tri"></i>`;

@customElement('app-root')
export class AppRoot extends LitElement {
  static styles = css`
    :host {
      display: block;
      position: relative;
      width: 1280px;
      height: 989px;
      overflow: hidden;
      background: #666;
      font-family: 'Liberation Sans', 'Noto Sans CJK SC', sans-serif;
      font-size: 12px;
      color: #333;
    }
    .ic { width: 18px; height: 18px; display: block; flex: none; overflow: visible; }

    /* title bar */
    .title { display: flex; align-items: center; height: 24px; background: linear-gradient(#8c8c8c, #7a7a7a 60%, #6e6e6e); }
    .logo { position: absolute; left: 0; top: 0; width: 40px; height: 40px; background: linear-gradient(#9a9a9a, #6a6a6a); border-right: 1px solid #555; border-bottom: 1px solid #444; }
    .qa { width: 24px; height: 24px; display: flex; align-items: center; justify-content: center; flex: none; }
    .qa .ic { width: 17px; height: 17px; }
    .logoPad { width: 46px; flex: none; }
    .car { width: 11px; height: 24px; display: flex; align-items: center; justify-content: center; flex: none; }
    .car i { border: 3px solid transparent; border-top: 3px solid #333; border-bottom: 0; }
    .wsTop { width: 179px; height: 21px; margin: 0 3px 0 1px; flex: none; display: flex; align-items: center; background: #cfcfcf; border: 1px solid #ddd; box-sizing: border-box; color: #666; font-size: 13px; padding-left: 2px; }
    .wsTop .ic { width: 18px; height: 18px; margin-right: 1px; }
    .wsTop span { flex: 1; }
    .wsTop .tri { border-top-color: #333; margin-right: 4px; }
    .drop { width: 12px; height: 22px; margin-right: 2px; background: #6c6c6c; border: 1px solid #999; box-sizing: border-box; display: flex; flex-direction: column; align-items: center; justify-content: center; gap: 1px; flex: none; }
    .drop b { display: block; width: 6px; height: 1px; background: #111; }
    .drop i { border: 3px solid transparent; border-top: 4px solid #111; border-bottom: 0; }
    .doc { width: 244px; height: 24px; flex: none; box-sizing: border-box; padding-left: 30px; display: flex; gap: 17px; align-items: center; font-size: 12.5px; color: #111; white-space: pre;
      background: radial-gradient(ellipse 60px 16px at 50px 24px, #e86a6a55, transparent), radial-gradient(ellipse 70px 16px at 215px 16px, #14304e, transparent), linear-gradient(90deg, #3a8fd8, #c8e6f8 14%, #e4f2fb 40%, #cde6f8 60%, #2c82c8 82%, #1a5a98); }
    .arrow { width: 13px; height: 24px; margin-left: 2px; flex: none; display: flex; align-items: center; justify-content: center; background: #666; }
    .arrow i { border: 4px solid transparent; border-left: 5px solid #111; border-right: 0; }
    .search { width: 178px; height: 22px; flex: none; background: #fff; color: #777; font-style: italic; font-size: 12px; line-height: 24px; box-sizing: border-box; padding-left: 3px; }
    .tr { flex: 1; display: flex; align-items: center; height: 24px; }
    .tr .u { color: #f2f2f2; font-size: 12px; margin-left: 1px; }
    .gapA { flex: 1; }
    .tr .mini { width: 20px; display: flex; justify-content: center; flex: none; }
    .tr .mini .ic { width: 17px; height: 17px; }
    .tr i.c { border: 3px solid transparent; border-top: 3px solid #333; border-bottom: 0; margin: 0 3px; }
    .m5 { margin-left: 5px; }
    .m14 { margin-left: 14px; }
    .wc { width: 122px; height: 24px; flex: none; display: flex; margin-left: 3px; padding-left: 17px; box-sizing: border-box; align-items: flex-start;
      background: radial-gradient(ellipse 40px 8px at 70px 24px, #ffffffcc, transparent), linear-gradient(90deg, #2e72b4, #4b8ed0 40%, #2a6cb0); }
    .wc div { height: 16px; border: 1px solid #ffffff88; border-top: 0; border-radius: 0 0 3px 3px; box-sizing: border-box; display: flex; justify-content: center; align-items: center; color: #fff; }
    .wc .b1 { width: 28px; }
    .wc .b2 { width: 25px; }
    .wc .b3 { width: 50px; font-weight: bold; font-size: 13px; }
    .wc .min { width: 10px; height: 3px; background: #fff; }
    .wc .rst { width: 8px; height: 8px; border: 2px solid #fff; box-sizing: border-box; }

    /* menu */
    .menu { height: 21px; display: flex; align-items: center; gap: 24.2px; padding-left: 55px; color: #f4f4f4; font-size: 12px; background: linear-gradient(#777, #4e4e4e); box-shadow: inset 0 1px 0 #444; }
    .menu span { white-space: nowrap; }
    .winbtns { margin-left: auto; display: flex; gap: 8px; align-items: center; padding-right: 5px; color: #111; }
    .winbtns .m { width: 10px; height: 2px; background: #111; margin-top: 8px; }
    .winbtns .r { width: 9px; height: 9px; border: 1.5px solid #111; }
    .winbtns b { font-size: 12px; }

    /* toolbars */
    .row { display: flex; height: 24px; margin-top: 3px; }
    .row1 { margin-top: 0; }
    .row4 { height: 23px; margin-top: 4px; }
    .tb { display: flex; align-items: center; box-sizing: border-box; background: #f0f0f0; border: 1px solid #2e2e2e; flex: none; height: 100%; }
    .grip { width: 7px; height: 100%; flex: none; background: radial-gradient(circle at 1px 1px, #111 0.8px, transparent 1px) 1px 3px / 3px 3px, #5a5a5a; }
    .b { width: 23px; height: 21px; display: flex; align-items: center; justify-content: center; flex: none; }
    .sp { width: 6px; height: 17px; flex: none; position: relative; }
    .sp::after { content: ''; position: absolute; left: 3px; top: 0; width: 1px; height: 100%; background: #a8a8a8; }
    .ca { width: 12px; display: flex; justify-content: center; flex: none; }
    .ca i { border: 3px solid transparent; border-top: 3px solid #aaa; border-bottom: 0; }
    .combo { height: 20px; margin: 0 1px; flex: none; display: flex; align-items: center; box-sizing: border-box; background: #f6f6f6; border: 1px solid #d4d4d4; border-radius: 3px; color: #777; font-size: 13px; padding: 0 4px; }
    .combo .txt { flex: 1; white-space: nowrap; overflow: hidden; }
    .tri { display: block; flex: none; width: 0; height: 0; border: 4px solid transparent; border-top: 5px solid #aaa; border-bottom: 0; margin-left: 4px; }
    .lyr .ic { width: 16px; height: 16px; }
    .sq { width: 8px; height: 8px; border: 1px solid #111; background: #fff; flex: none; margin: 0 5px 0 2px; }
    .bitmap { font-family: 'Liberation Mono', monospace; font-size: 10px; color: #555; }
    .bitmap .sq { margin: 0 3px 0 0; }
    .ln { height: 1px; background: #222; flex: none; }
    .ln1 { width: 56px; margin: 0 5px 0 0; }
    .ln2 { width: 30px; margin: 0 5px 0 0; }
    .dbl { width: 5px; height: 20px; margin: 0 1px; border-left: 1px solid #999; border-right: 1px solid #999; box-sizing: border-box; flex: none; }
    .gap9 { width: 9px; flex: none; }
    .gap2 { width: 2px; flex: none; }
    .gap1 { width: 1px; flex: none; }

    /* work area */
    .work { display: grid; margin-top: 5px; grid-template-columns: 28px 2px 1199px 18px 6px 24px 3px; grid-template-rows: 697px 15px; }
    .vt { display: flex; flex-direction: column; align-items: center; background: #eee; box-sizing: border-box; border: 1px solid #2e2e2e; align-self: start; width: 24px; }
    .vgrip { align-self: stretch; height: 6px; flex: none; background: radial-gradient(circle at 1px 1px, #111 0.8px, transparent 1px) 3px 1px / 3px 3px, #5a5a5a; }
    .vt .b { width: 22px; height: 22px; }
    .vsep { width: 18px; height: 1px; margin: 4px 0; background: #aaa; }
    .leftCol { grid-column: 1; grid-row: 1 / span 2; padding-left: 1px; }
    .bar { grid-column: 2; grid-row: 1 / span 2; background: #8c8c8c; }
    .rightCol { grid-column: 6; grid-row: 1 / span 2; display: flex; flex-direction: column; gap: 4px; }
    .leftCol .vt { margin-top: 0; height: 448px; }
    .canvas { grid-column: 3; grid-row: 1; display: block; width: 1199px; height: 697px; background: #212830; }
    .vs { grid-column: 4; grid-row: 1; background: #f0f0f0; display: flex; flex-direction: column; align-items: center; padding-top: 8px; box-sizing: border-box; }
    .vs .up { border: 4px solid transparent; border-bottom: 4px solid #333; border-top: 0; }
    .vs .thumb { width: 14px; height: 15px; margin-top: 110px; background: linear-gradient(90deg, #fff, #c4c4c4); border: 1px solid #bbb; border-radius: 2px; }
    .vs .down { margin-top: auto; margin-bottom: 6px; border: 4px solid transparent; border-top: 4px solid #333; border-bottom: 0; }
    .tabs { grid-column: 3 / span 2; grid-row: 2; display: flex; align-items: stretch; background: #f2f2f2; border-bottom: 1px solid #fff; box-sizing: border-box; }
    .nav { display: flex; gap: 3px; padding: 2px 0 2px 3px; width: 57px; box-sizing: border-box; flex: none; }
    .nav svg { width: 11px; height: 11px; display: block; background: linear-gradient(#f4f4f4, #cfcfcf); }
    .tab { position: relative; display: flex; align-items: center; padding: 0 9px 0 7px; font-size: 12px; color: #222; }
    .tab::after { content: ''; position: absolute; right: 0; top: 0; bottom: 0; width: 1px; background: #555; transform: skewX(-22deg); }
    .tab.on { background: #222; color: #fff; padding: 0 8px 0 11px; clip-path: polygon(0 0, 100% 0, calc(100% - 5px) 100%, 6px 100%); }
    .tab.on::after { display: none; }
    .hs { margin-left: auto; display: flex; align-items: center; width: 427px; flex: none; box-sizing: border-box; }
    .hs .h0 { width: 6px; height: 13px; border: 1px solid #bbb; border-radius: 2px; box-sizing: border-box; flex: none; }
    .hs .l { margin-left: 8px; border: 4px solid transparent; border-right: 4px solid #333; border-left: 0; }
    .hs .tk { flex: 1; height: 100%; background: #e8e8e8; margin: 0 0 0 6px; }
    .hs .th { width: 15px; height: 13px; background: linear-gradient(#ddd, #bbb); border: 1px solid #bbb; box-sizing: border-box; flex: none; }
    .hs .r { margin: 0 24px 0 8px; border: 4px solid transparent; border-left: 4px solid #333; border-right: 0; }

    .dimRow { height: 24px; margin: 6px 0 0 30px; display: flex; }

    /* command line */
    .cmd { display: grid; grid-template-columns: 24px 1fr; grid-template-rows: 33px 23px; margin-top: 9px; }
    .side { grid-row: 1 / span 2; background: #555; color: #ddd; display: flex; flex-direction: column; align-items: center; }
    .side .g { width: 100%; height: 6px; background: radial-gradient(circle at 1px 1px, #aaa 0.8px, transparent 1px) 2px 1px / 3px 3px, #777; }
    .side b { font-size: 15px; line-height: 22px; margin-top: 4px; color: #eee; }
    .side svg { width: 17px; height: 17px; margin-top: 4px; }
    .hist { background: #c8c8c8; font-family: 'Liberation Mono', 'Noto Sans CJK SC', monospace; font-size: 12px; color: #111; padding: 1px 0 0 2px; box-sizing: border-box; }
    .hist div { height: 15px; line-height: 15px; overflow: visible; white-space: pre; }
    .cj { font-family: 'Noto Sans CJK SC', sans-serif; font-size: 13.5px; line-height: 1; }
    .input { background: #fff; border-top: 1px solid #333; border-bottom: 1px solid #333; display: flex; align-items: center; box-sizing: border-box; font-family: 'Liberation Mono', 'Noto Sans CJK SC', monospace; color: #111; padding-left: 5px; white-space: pre; }
    .input .ic { width: 18px; height: 18px; }
    .input .ca { width: 12px; }
    .input .kw { font-weight: bold; font-size: 13px; margin-right: 6px; }
    .pill { width: 51px; height: 20px; margin-right: 4px; flex: none; background: #d8d8d8; border-radius: 3px; display: flex; align-items: center; justify-content: center; }
    .pill em { font-style: normal; color: #0000d8; }
    .brk { margin-left: 1px; }
    .pill + .brk { margin-left: -3px; }

    /* status bar */
    .status { height: 22px; margin-top: 1px; display: flex; align-items: stretch; background: linear-gradient(#7c7c7c, #565656); border-bottom: 1px solid #2e2e2e; box-sizing: border-box; }
    .coords { width: 219px; flex: none; padding: 5px 0 0 11px; box-sizing: border-box; font-size: 11.5px; color: #8c8c8c; letter-spacing: 0.3px; }
    .sb { width: 22px; flex: none; display: flex; align-items: center; justify-content: center; border-right: 1px solid #4a4a4a; background: linear-gradient(#9a9a9a, #777); box-sizing: border-box; }
    .sb.on { background: linear-gradient(#d8ecf6, #a8cfe0); }
    .sb .ic, .sr .ic { width: 18px; height: 18px; }
    .fill { flex: 1; }
    .sr { display: flex; align-items: center; justify-content: center; flex: none; height: 100%; }
    .model { width: 28px; background: #8a8a8a; color: #111; font-size: 12.5px; }
    .w21 { width: 21px; border-left: 1px solid #666; box-sizing: border-box; background: #8a8a8a; }
    .w23 { width: 23px; }
    .annos { width: 52px; gap: 3px; color: #111; background: #7a7a7a; margin-left: 18px; justify-content: flex-start; padding-left: 3px; box-sizing: border-box; }
    .annos i { border: 3px solid transparent; border-top: 4px solid #111; border-bottom: 0; }
    .bulbB { width: 26px; height: 20px; background: #9a9a9a; margin: 0 5px 0 0; align-self: center; }
    .mt { margin-left: 8px; }
    .sq16 { width: 10px; }
    .sq16 i { border: 3px solid transparent; border-top: 4px solid #111; border-bottom: 0; }
    .winEnd { margin-right: 2px; }
    .task { height: 5px; display: flex; background: linear-gradient(#2f78b0, #1f5f98); }
    .task i { display: block; height: 5px; flex: none; background: #cfe3ef; margin-right: 3px; border-radius: 2px 2px 0 0; }
    .t0 { width: 370px; background: transparent !important; }
    .t1 { width: 60px; }
    .t2 { width: 52px; background: #f2e8a8 !important; }
    .t3 { width: 60px; }

    /* watermark */
    .wm { position: absolute; left: 983px; top: 852px; width: 240px; height: 112px; pointer-events: none; }
    .wm .bai { position: absolute; left: 0; top: 25px; font: bold 49px 'Liberation Sans', sans-serif; color: #ffffffb0; letter-spacing: -1px; line-height: 50px; }
    .wm .jy { position: absolute; left: 147px; top: 31px; font: bold 37px 'Noto Sans CJK SC', sans-serif; color: #ffffffa8; line-height: 44px; white-space: nowrap; letter-spacing: 0; }
    .wm .url { position: absolute; left: 0; top: 78px; font: 28.5px 'Liberation Sans', sans-serif; color: #ffffff50; -webkit-text-stroke: 1px #d6d6d6; white-space: nowrap; line-height: 32px; }
    .wm svg { position: absolute; left: 80px; top: 0; width: 60px; height: 74px; }
  `;

  private items(list: string) {
    return list.split(' ').map((n) => {
      if (n === '|') return html`<span class="sp"></span>`;
      if (n === '^') return html`<span class="ca"><i></i></span>`;
      return html`<span class="b">${icon(n)}</span>`;
    });
  }

  private combo(width: number, label: string, pad = 4) {
    return html`<div class="combo" style="width:${width}px;padding-left:${pad}px"><span class="txt">${label}</span>${caretDown}</div>`;
  }

  private canvas() {
    return html`<svg class="canvas" viewBox="30 155 1199 697" xmlns="http://www.w3.org/2000/svg">
      <polygon points="580,213 343,349 602,497 838,361" fill="#bb0000" />
      <polygon points="343,349 602,497 602,771 343,621" fill="#999900" />
      <polygon points="602,497 838,361 839,634 602,771" fill="#1919a5" />
      <text x="35" y="173" font-size="13" fill="#d8d8d8" font-family="Liberation Sans, Noto Sans CJK SC, sans-serif">[−][西南等轴测][真实]</text>

      <!-- viewcube -->
      <ellipse cx="1148" cy="262" rx="56" ry="36" fill="none" stroke="#454a52" stroke-width="13" />
      <polygon points="1148,199 1114,217 1148,235 1182,217" fill="#9ea0a3" />
      <polygon points="1114,217 1148,235 1148,275 1116,255" fill="#a8aaad" />
      <polygon points="1148,235 1182,217 1181,255 1148,275" fill="#8e9093" />
      <polygon points="1142,232 1148,228 1155,232 1154,240 1148,243 1142,240" fill="#8f97a0" opacity="0.7" />
      <g font-family="Noto Sans CJK SC, sans-serif" text-anchor="middle">
        <text transform="matrix(.85 -.5 .85 .5 1148 222)" font-size="21" fill="#55585c">上</text>
        <text transform="matrix(.87 .5 0 1 1130 255)" font-size="23" fill="#55585c">左</text>
        <text transform="matrix(.87 -.5 0 1 1166 258)" font-size="23" fill="#55585c">前</text>
        <text transform="matrix(.85 -.45 .7 .5 1108 240)" font-size="18" fill="#c4c8cc">北</text>
        <text transform="matrix(.85 .45 -.7 .5 1188 232)" font-size="18" fill="#c4c8cc">东</text>
        <text transform="matrix(.85 -.45 .7 .6 1101 294)" font-size="20" fill="#c4c8cc">西</text>
        <text transform="matrix(.85 .45 -.7 .6 1198 284)" font-size="20" fill="#c4c8cc">南</text>
      </g>
      <rect x="1124" y="322" width="47" height="17" rx="4" fill="#7f8088" />
      <text x="1128" y="334" font-size="10" font-family="Liberation Sans, sans-serif" font-weight="bold" fill="#5f606a">WCS</text>
      <path d="M1159 328h7l-3.5 5z" fill="none" stroke="#5f606a" />

      <!-- ucs -->
      <path d="M82 762v40" stroke="#1a4aa8" stroke-width="5" />
      <rect x="80" y="761" width="3" height="3" fill="#9fd0ff" />
      <path d="M46 780l34 22" stroke="#1c9a24" stroke-width="4" />
      <path d="M47 780l33 21" stroke="#6ee06a" stroke-width="1.2" />
      <path d="M116 781l-32 21" stroke="#b02828" stroke-width="4" />
      <path d="M115 781l-31 20" stroke="#e06a6a" stroke-width="1.2" />
      <path d="M80 745h13l-13 13h13" fill="none" stroke="#1e6ad8" />
      <path d="M44 764l6.5 6.5 6.5-6.5M50.5 770.5v7" fill="none" stroke="#14a014" />
      <path d="M113 764l13 13M126 764l-13 13" fill="none" stroke="#c02020" />
    </svg>`;
  }

  private navBtn(d: string) {
    return html`<svg viewBox="0 0 11 11"><path d=${d} fill="#555" stroke="#555" stroke-width="0.6" /></svg>`;
  }

  render() {
    return html`
      <div class="title">
        <div class="logoPad"></div>
        ${['new', 'open', 'save', 'saveas', 'pub'].map((n) => html`<span class="qa">${icon(n)}</span>`)}
        <span class="car"><i></i></span>
        <span class="qa">${icon('print')}</span>
        <span class="qa">${icon('undoD')}</span>
        <span class="car"><i></i></span>
        <span class="qa">${icon('redoD')}</span>
        <span class="car"><i></i></span>
        <div class="wsTop">${icon('wscog')}<span>AutoCAD 经典</span>${caretDown}</div>
        <div class="drop"><b></b><i></i></div>
        <div class="doc"><span>AutoCAD 2013</span><span>Drawing1.dwg</span></div>
        <div class="arrow"><i></i></div>
        <div class="search">键入关键字或短语</div>
        <div class="tr">
          <span class="qa">${icon('binoc')}</span>
          <span class="qa">${icon('user')}</span>
          <span class="u">登录</span>
          <span class="gapA"></span>
          <i class="c"></i>
          <span class="mini m5">${icon('xchange')}</span>
          <span class="mini m5">${icon('a360')}</span>
          <i class="c"></i>
          <span class="mini m14">${icon('helpC')}</span>
          <i class="c"></i>
          <div class="wc">
            <div class="b1"><span class="min"></span></div>
            <div class="b2"><span class="rst"></span></div>
            <div class="b3">X</div>
          </div>
        </div>
      </div>
      <div class="logo">
        <svg viewBox="0 0 40 40" width="40" height="40">
          <path d="M4 38L17 6h6l5 30-7-1-1-8h-6l-3 8z" fill="#c41a1a" stroke="#5c0a0a" />
          <path d="M17 6h6l5 30-7-1z" fill="#8e1010" />
          <path d="M15 23h4l-1-8z" fill="#8a8a8a" />
          <path d="M30 18h7l-3.5 4z" fill="#222" />
        </svg>
      </div>

      <div class="menu">
        ${MENU.map(([t, k]) => html`<span>${t}(<u>${k}</u>)</span>`)}
        <div class="winbtns"><span class="m"></span><span class="r"></span><b>X</b></div>
      </div>

      <div class="row row1">
        <div class="tb"><span class="grip"></span>${this.items(TB_ROW1A)}<span class="gap2"></span></div>
        <div class="tb">
          <span class="grip"></span><span class="b">${icon('textstyle')}</span>
          ${this.combo(118, 'Standard', 18)}<span class="sp"></span>
          <span class="b">${icon('dimstyle')}</span>${this.combo(119, 'ISO-25', 19)}<span class="sp"></span>
          <span class="b">${icon('tablestyle')}</span>${this.combo(117, 'Standard', 4)}<span class="sp"></span>
          <span class="b">${icon('mleader')}</span>${this.combo(118, 'Standard', 18)}
        </div>
      </div>

      <div class="row">
        <div class="tb"><span class="grip"></span><span class="gap1"></span>${this.combo(173, 'AutoCAD 经典', 8)}${this.items('wscog lockui')}<span class="gap1"></span></div>
        <div class="tb">
          <span class="grip"></span>${this.items('layers')}
          <div class="combo lyr" style="width:298px">
            ${icon('bulb')}${icon('sun')}${icon('freeze')}${icon('lock')}<span class="sq"></span><span class="txt">0</span>${caretDown}
          </div>
          ${this.items('layerstate layerprev layerlist')}
        </div>
        <span class="gap9"></span>
        <div class="tb">
          <span class="gap1"></span>
          <div class="combo bitmap" style="width:148px"><span class="sq"></span><span class="txt">ByLayer</span>${caretDown}</div>
          <span class="dbl"></span>
          <div class="combo bitmap" style="width:158px"><span class="ln ln1"></span><span class="txt">ByLayer</span>${caretDown}</div>
          <span class="dbl"></span>
          <div class="combo bitmap" style="width:124px"><span class="ln ln2"></span><span class="txt">ByLayer</span>${caretDown}</div>
          <span class="dbl"></span>
          <div class="combo bitmap" style="width:118px"><span class="txt">BYCOLOR</span>${caretDown}</div>
        </div>
      </div>

      <div class="row">
        <div class="tb"><span class="grip"></span>${this.items(TB_ROW3A)}</div>
        <span class="gap2"></span>
        <div class="tb"><span class="grip"></span>${this.items(TB_ROW3B)}</div>
        <span class="gap2"></span>
        <div class="tb"><span class="grip"></span>${this.items(TB_ROW3C)}</div>
      </div>

      <div class="row row4">
        <div class="tb"><span class="grip"></span>${this.items(TB_ROW4)}${this.combo(138, '')}</div>
      </div>

      <div class="work">
        <div class="leftCol"><div class="vt"><span class="vgrip"></span>${this.items(LEFT)}</div></div>
        <div class="bar"></div>
        ${this.canvas()}
        <div class="vs"><i class="up"></i><div class="thumb"></div><i class="down"></i></div>
        <div class="rightCol">
          <div class="vt"><span class="vgrip"></span>${this.items(RIGHT)}</div>
          <div class="vt">
            <span class="vgrip"></span>${this.items('oFront oBack oAbove oBelow')}
            <span class="vsep"></span>${this.items('abc bound')}
          </div>
        </div>
        <div class="tabs">
          <div class="nav">
            ${this.navBtn('M2 2v7M9 2v7L4 5.5z')}${this.navBtn('M8 2v7L3 5.5z')}${this.navBtn('M3 2v7l5-3.5z')}${this.navBtn('M9 2v7M2 2v7l5-3.500z')}
          </div>
          <div class="tab on">模型</div><div class="tab">布局1</div><div class="tab">布局2</div>
          <div class="hs"><span class="h0"></span><i class="l"></i><span class="tk"></span><span class="th"></span><i class="r"></i></div>
        </div>
      </div>

      <div class="dimRow">
        <div class="tb"><span class="grip"></span>${this.items(TB_DIM)}${this.combo(118, 'ISO-25', 17)}${this.items('dimstyle')}</div>
      </div>

      <div class="cmd">
        <div class="side">
          <span class="g"></span><b>X</b>
          <svg viewBox="0 0 18 18"><path d="M3 16L10 8c-1-3 1-6 5-6l-3 3 2 2 3-3c0 4-3 6-6 5l-6 7z" fill="#eee" /></svg>
        </div>
        <div class="hist">
          <div>${mix('选择面或 [放弃(U)/删除(R)/全部(ALL)]:')}</div>
          <div>${mix('输入面编辑选项')}</div>
        </div>
        <div class="input">
          ${icon('extrude')}<span class="ca"><i></i></span>
          <span class="kw">SOLIDEDIT</span><span>[</span>
          ${OPTS.map(([t, k]) => html`<span class="pill"><span class="cj">${t}</span>(<em>${k}</em>)</span>`)}
          <span class="brk">]</span><span> &lt;<span class="cj">退出</span>&gt;:</span>
        </div>
      </div>

      <div class="status">
        <div class="coords">625.6690, 66.1621 , 0.0000</div>
        ${STATUS.map((n) => html`<span class="sb ${STATUS_ON.has(n) ? 'on' : ''}">${icon(n)}</span>`)}
        <span class="fill"></span>
        <span class="sr model">模型</span>
        <span class="sr w21">${icon('sLayout')}</span>
        <span class="sr w21">${icon('sQv')}</span>
        <span class="sr annos">${icon('sAnno')}1:1<i></i></span>
        <span class="sr w23">${icon('sAnnoA')}</span>
        <span class="sr w23">${icon('sAnnoB')}</span>
        <span class="sr w23 mt">${icon('sGear')}</span>
        <span class="sr w23">${icon('sLock')}</span>
        <span class="sr w23">${icon('sHw')}</span>
        <span class="sr bulbB">${icon('sBulb')}</span>
        <span class="sr sq16"><i></i></span>
        <span class="sr w23 winEnd">${icon('sWin')}</span>
      </div>
      <div class="task"><i class="t0"></i><i class="t1"></i><i class="t2"></i><i class="t3"></i></div>

      <div class="wm">
        <div class="bai">Bai</div>
        <svg viewBox="0 0 60 74">
          <ellipse cx="22" cy="12" rx="7" ry="11" fill="#ffffffa8" />
          <ellipse cx="41" cy="12" rx="7" ry="11" fill="#ffffffa8" />
          <ellipse cx="7" cy="28" rx="6" ry="9" fill="#ffffffa8" transform="rotate(-20 7 28)" />
          <ellipse cx="55" cy="28" rx="6" ry="9" fill="#ffffffa8" transform="rotate(20 55 28)" />
          <path d="M30 30c9 0 11 8 18 14 9 8 5 27-8 27-5 0-6-2-10-2s-6 2-11 2C6 71 2 52 12 44c7-6 9-14 18-14z" fill="#ffffffb0" />
          <text x="31" y="65" font-size="23" font-weight="bold" text-anchor="middle" fill="#8c8c8c" font-family="Liberation Sans, sans-serif">du</text>
        </svg>
        <div class="jy">经验</div>
        <div class="url">jingyan.baidu.com</div>
      </div>
    `;
  }
}
